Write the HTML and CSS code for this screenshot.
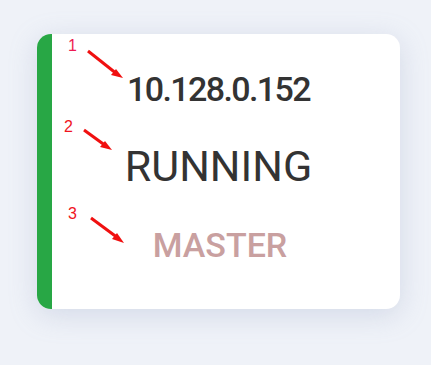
FILE: index.html
```html
<!DOCTYPE html>
<html>
<head>
<meta charset="utf-8">
<link rel="stylesheet" href="styles.css">
</head>
<body>
  <div class="card">
    <div class="stripe"></div>
    <div class="content">
      <div class="ip">10.128.0.152</div>
      <div class="status">RUNNING</div>
      <div class="role">MASTER</div>
    </div>
    <svg class="notes" width="120" height="230" viewBox="0 0 120 230">
      <text x="31" y="17" class="num n1">1</text>
      <text x="27" y="98" class="num">2</text>
      <text x="31" y="185" class="num">3</text>
      <line x1="51" y1="17" x2="80" y2="40" class="arr"/>
      <polygon points="86,44 74,41 79,35" class="head"/>
      <line x1="47" y1="96" x2="69" y2="112" class="arr"/>
      <polygon points="75,116 63,113 68,107" class="head"/>
      <line x1="54" y1="184" x2="81" y2="204" class="arr"/>
      <polygon points="87,209 75,205 80,199" class="head"/>
    </svg>
  </div>
</body>
</html>
```
FILE: styles.css
```css
html, body {
  margin: 0;
  padding: 0;
}
body {
  background: #eff2f8;
  width: 431px;
  height: 365px;
  padding: 34px 0 0 37px;
  box-sizing: border-box;
  font-family: Roboto, "Liberation Sans", sans-serif;
}
.card {
  position: relative;
  width: 363px;
  height: 275px;
  background: #fff;
  border-radius: 14px;
  overflow: hidden;
  box-shadow: 0 6px 28px rgba(140, 155, 190, 0.28);
  display: flex;
}
.stripe {
  width: 15px;
  flex: none;
  background: #28a745;
}
.content {
  flex: 1;
  display: flex;
  flex-direction: column;
  align-items: center;
  padding: 38px 15px 0 0;
  gap: 39px;
  color: #333;
}
.ip {
  font-size: 34px;
  line-height: 1;
  font-weight: 500;
  letter-spacing: -1.6px;
}
.status {
  font-size: 43px;
  line-height: 1;
  font-weight: 400;
}
.role {
  font-size: 34px;
  line-height: 1;
  font-weight: 500;
  color: #c9a0a0;
  margin-top: 1px;
  padding-left: 3px;
}
.notes {
  position: absolute;
  left: 0;
  top: 0;
}
.num {
  font-family: "Liberation Sans", Arial, sans-serif;
  font-size: 16px;
  fill: #f0141e;
}
.n1 { fill: #ee1a52; }
.arr {
  stroke: #f01010;
  stroke-width: 3;
}
.head {
  fill: #f01010;
}
```
